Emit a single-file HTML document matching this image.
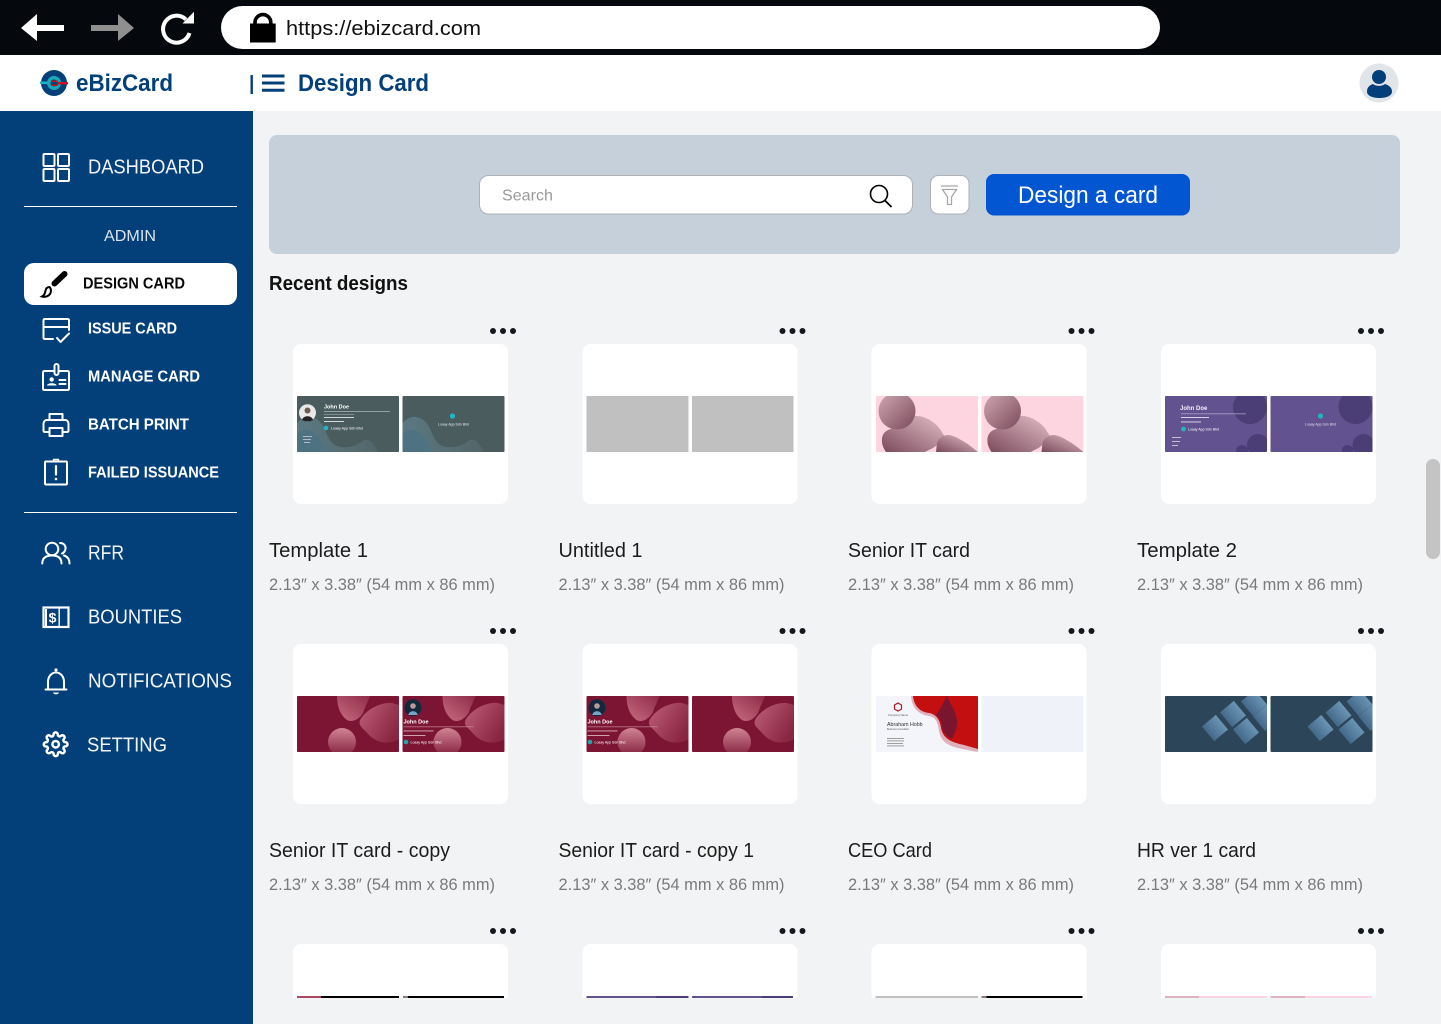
<!DOCTYPE html>
<html lang="en"><head><meta charset="utf-8"><title>eBizCard - Design Card</title>
<style>
html,body{margin:0;padding:0;background:#f2f3f4;overflow:hidden;width:1441px;height:1024px}
svg{display:block}
text{font-family:"Liberation Sans",Arial,sans-serif}
.nav{font-size:20px;fill:#f2f5f8}
.sub{font-size:16px;font-weight:700;fill:#fff}
.t{font-size:20px;fill:#1c1c1c}
.d{font-size:16.5px;fill:#7a7a7a}
.h{font-size:24px;font-weight:700;fill:#03407a}
.ic{fill:none;stroke:#fff;stroke-width:2;stroke-linejoin:round;stroke-linecap:round}
</style></head><body>
<svg xmlns="http://www.w3.org/2000/svg" width="1441" height="1024" viewBox="0 0 1441 1024">
<defs>
<clipPath id="c"><rect width="102" height="56" rx="1"/></clipPath>
<linearGradient id="pg" x1="0" y1="0" x2="1" y2="1"><stop offset="0" stop-color="#d2a8b4"/><stop offset="1" stop-color="#7a4a5a"/></linearGradient>
<linearGradient id="pg2" x1="1" y1="0" x2="0" y2="1"><stop offset="0" stop-color="#e4c0ca"/><stop offset="1" stop-color="#7c4a5b"/></linearGradient>
<linearGradient id="mg" x1="0" y1="0" x2="1" y2="0.6"><stop offset="0" stop-color="#be6078"/><stop offset="1" stop-color="#8a2642"/></linearGradient>
<linearGradient id="mga" x1="1" y1="0" x2="0" y2="1"><stop offset="0" stop-color="#8e2c48"/><stop offset="1" stop-color="#c86c80"/></linearGradient>
<linearGradient id="mg2" x1="0" y1="0" x2="0" y2="1"><stop offset="0" stop-color="#d08494"/><stop offset="1" stop-color="#84203c"/></linearGradient>
<linearGradient id="ng" x1="0" y1="0" x2="1" y2="0"><stop offset="0" stop-color="#44698a"/><stop offset="1" stop-color="#6a94b4"/></linearGradient>
<linearGradient id="gg" x1="0" y1="0" x2="1" y2="0"><stop offset="0" stop-color="#5b7882"/><stop offset="1" stop-color="#526669"/></linearGradient>

<g id="wave"><path d="M0 27C5 22 10 20 14 21C21 22 26 28 29 36C32 44 36 50 44 51C52 52 60 50 67 44C74 42 78 50 81 56H0Z" fill="url(#gg)"/><path d="M0 38C8 30 16 34 22 42C26 48 28 52 30 56H0Z" fill="#4f7282"/></g>

<g id="gf"><g clip-path="url(#c)"><rect width="102" height="56" fill="#4a5c5e"/><use href="#wave"/>
<circle cx="10.5" cy="16.7" r="8.5" fill="#e8e8e8"/><circle cx="10.5" cy="14.5" r="3" fill="#6e5a50"/><path d="M5 24C6 19 15 19 16 24L13 25.2H8Z" fill="#222"/>
<text x="27" y="12.5" font-size="5.5" font-weight="700" fill="#fff">John Doe</text>
<rect x="27" y="15" width="66" height=".8" fill="#a9b4b4"/><rect x="27" y="18" width="30" height=".7" fill="#98a4a4"/>
<rect x="27" y="21" width="30" height=".9" fill="#dfe5e5"/><rect x="27" y="25" width="20" height=".9" fill="#dfe5e5"/>
<circle cx="29" cy="32" r="2.3" fill="#21b6c7"/><text x="34" y="33.5" font-size="3.6" fill="#fff">Loaay App Sdn Bhd</text>
<rect x="6" y="40" width="9" height=".8" fill="#ccd"/><rect x="6" y="43" width="8" height=".8" fill="#ccd"/><rect x="7" y="46" width="6" height=".8" fill="#ccd"/>
</g></g>
<g id="gb"><g clip-path="url(#c)"><rect width="102" height="56" fill="#4a5c5e"/><use href="#wave"/>
<circle cx="50" cy="20" r="2.6" fill="#21b6c7"/><text x="51" y="29.5" text-anchor="middle" font-size="3.5" fill="#e8eeee">Loaay App Sdn Bhd</text></g></g>

<g id="pk"><g clip-path="url(#c)"><rect width="102" height="56" fill="#fdd5e0"/>
<path d="M6 46C5 38 10 34 15 33C22 29 28 23 38 20C47 19 58 25 64 33L69 41C65 46 60 50 57 52L49 56H10C8 53 6 49 6 46Z" fill="url(#pg2)"/>
<circle cx="21" cy="15" r="18.5" fill="url(#pg)"/>
<path d="M61 47C63 41 68 39 73 39C78 40 82 42 85 44C91 47 97 52 102 56H60Z" fill="url(#pg2)"/></g></g>

<g id="pf"><g clip-path="url(#c)"><rect width="102" height="56" fill="#635290"/>
<circle cx="85" cy="11" r="17" fill="#4b3d75"/><circle cx="93" cy="49" r="11" fill="#4b3d75"/><circle cx="77" cy="55" r="6" fill="#4b3d75"/>
<text x="15" y="14" font-size="6" font-weight="700" fill="#f1eff7">John Doe</text>
<rect x="16" y="17.5" width="65" height=".7" fill="#b6add0"/><rect x="16" y="21" width="28" height=".9" fill="#e4e0ef"/><rect x="16" y="25.5" width="20" height=".9" fill="#e4e0ef"/>
<circle cx="18.5" cy="33" r="2.4" fill="#22b4be"/><text x="23" y="34.5" font-size="3.5" fill="#fff">Loaay App Sdn Bhd</text>
<rect x="7" y="41" width="9" height=".8" fill="#ddd"/><rect x="7" y="45" width="8" height=".8" fill="#ddd"/><rect x="7" y="49" width="6" height=".8" fill="#ddd"/></g></g>
<g id="pb"><g clip-path="url(#c)"><rect width="102" height="56" fill="#635290"/>
<circle cx="85" cy="11" r="17" fill="#4b3d75"/><circle cx="93" cy="49" r="11" fill="#4b3d75"/><circle cx="77" cy="55" r="6" fill="#4b3d75"/>
<circle cx="50" cy="20" r="2.6" fill="#22b4be"/><text x="50" y="29.5" text-anchor="middle" font-size="3.5" fill="#e4e0ef">Loaay App Sdn Bhd</text></g></g>

<g id="mb"><g clip-path="url(#c)"><rect width="102" height="56" fill="#7c1533"/>
<path d="M40 0C40 10 43 19 50 24C56 27 62 23 66 17C68 11 71 5 73 0Z" fill="url(#mga)"/>
<path d="M63 24C70 12 85 6 95 7L102 9V43C90 50 78 46 71 38C66 32 61 30 63 24Z" fill="url(#mg)"/>
<circle cx="45" cy="46" r="14" fill="url(#mg2)"/></g></g>
<g id="mt"><use href="#mb"/><g clip-path="url(#c)">
<circle cx="10.5" cy="11.7" r="8.5" fill="#12283c"/><circle cx="10.5" cy="10" r="2.8" fill="#b99"/><path d="M6 19C6 14 15 14 15 19Z" fill="#7aa2c4"/>
<text x="1" y="27.5" font-size="5.5" font-weight="700" fill="#fff">John Doe</text>
<rect x="1" y="30.5" width="70" height=".7" fill="#c98c99"/><rect x="1" y="34.5" width="30" height=".9" fill="#dcb0ba"/><rect x="1" y="39" width="22" height=".9" fill="#dcb0ba"/>
<circle cx="3.5" cy="46" r="2.3" fill="#22a4ae"/><text x="8" y="47.5" font-size="3.5" fill="#fff">Loaay App Sdn Bhd</text></g></g>

<g id="ceo"><g clip-path="url(#c)"><rect width="102" height="56" fill="#f3f5fa"/>
<path d="M35 0C36 13 44 19 53 20C60 21 62 27 63 35C65 46 72 50 86 53L102 56V0Z" fill="#dfb0ba"/>
<path d="M37 0C38 10 44 16 53 17C60 18 64 24 65 32C67 42 74 46 88 49L102 53V0Z" fill="#c30f10"/>
<path d="M71 0C74 8 78 12 80 20C83 27 80 35 76 43C70 40 67 36 66 31C66 25 63 21 60 19C64 14 67 7 71 0Z" fill="#7a1530"/>
<path d="M22 7L25.5 9V13L22 15L18.5 13V9Z" fill="none" stroke="#b5182f" stroke-width="1.2"/>
<text x="22" y="20" text-anchor="middle" font-size="2.8" fill="#555">Company Name</text>
<text x="11" y="30" font-size="5.3" fill="#333">Abraham Hobb</text>
<text x="11" y="34" font-size="2.4" fill="#555">Business Consultant</text>
<rect x="11" y="42" width="17" height=".8" fill="#888"/><rect x="11" y="44.5" width="17" height=".8" fill="#888"/><rect x="11" y="47" width="16" height=".8" fill="#888"/><rect x="11" y="49.5" width="17" height=".8" fill="#888"/></g></g>

<g id="nv"><g clip-path="url(#c)"><rect width="102" height="56" fill="#2d4559"/>
<g fill="url(#ng)"><rect x="-9" y="-9.5" width="18" height="19" transform="translate(50 32) rotate(-40)"/><rect x="-9" y="-9.5" width="18" height="19" transform="translate(68 18) rotate(-40)"/><rect x="-9" y="-9.5" width="18" height="19" transform="translate(81 35) rotate(-40)"/><rect x="-9" y="-9.5" width="18" height="19" transform="translate(89 7) rotate(-40)"/><rect x="-9" y="-9.5" width="18" height="19" transform="translate(101 22) rotate(-40)"/></g></g></g>

<g id="more" fill="#14181c"><circle cx="0" cy="0" r="3"/><circle cx="10" cy="0" r="3"/><circle cx="20" cy="0" r="3"/></g>
</defs>

<rect width="1441" height="1024" fill="#f2f3f4"/>

<!-- browser bar -->
<rect width="1441" height="55" fill="#05090d"/>
<path d="M21 28L37 14V25H64V31H37V41Z" fill="#fff"/>
<path d="M134 28L118 14V25H91V31H118V41Z" fill="#8f8f8f"/>
<path d="M186 19.5A13.5 13.5 0 1 0 189.5 33" fill="none" stroke="#fff" stroke-width="4"/>
<path d="M194 11.7V23.5H182.5Z" fill="#fff"/>
<rect x="221" y="6" width="939" height="43" rx="21.5" fill="#fff"/>
<rect x="250" y="23.5" width="25.7" height="19" fill="#000"/>
<path d="M255 25V22.5a7.9 7.9 0 0 1 15.8 0V25" fill="none" stroke="#000" stroke-width="3.6"/>
<text x="286" y="35" font-size="20" fill="#111" textLength="195" lengthAdjust="spacingAndGlyphs">https://ebizcard.com</text>

<!-- app header -->
<rect y="55" width="1441" height="56" fill="#fff"/>
<circle cx="54" cy="83" r="13" fill="#03407a"/>
<rect x="40" y="81.5" width="18" height="2.5" fill="#22b4c4"/>
<circle cx="54" cy="83" r="7" fill="#1aa9b8"/><circle cx="54" cy="83" r="3.5" fill="#03407a"/>
<path d="M52 80.5H58V82H68V84.5H58V86H52V84.5H57V82H52Z" fill="#c8141e"/>
<text x="76" y="91" class="h" textLength="97" lengthAdjust="spacingAndGlyphs">eBizCard</text>
<rect x="250.5" y="75" width="2.4" height="19" fill="#03407a"/>
<path d="M262 76H284.5M262 83H284.5M262 90.3H284.5" stroke="#03407a" stroke-width="3" fill="none"/>
<text x="298" y="91" class="h" textLength="131" lengthAdjust="spacingAndGlyphs">Design Card</text>
<circle cx="1379" cy="83" r="19.5" fill="#e1e4e8"/>
<circle cx="1379" cy="77" r="7" fill="#03407a"/>
<path d="M1367 91.5C1367 87 1370 85 1373 84C1376 86.5 1382 86.5 1385 84C1388 85 1392 87 1392 91.5C1392 96 1386 98 1379.5 98C1373 98 1367 96 1367 91.5Z" fill="#03407a"/>

<!-- sidebar -->
<rect y="111" width="253" height="913" fill="#03407a"/>
<g class="ic"><rect x="43.5" y="154" width="11" height="12" rx="1"/><rect x="58" y="154" width="11" height="12" rx="1"/><rect x="43.5" y="169" width="11" height="12" rx="1"/><rect x="58" y="169" width="11" height="12" rx="1"/></g>
<text x="88" y="173.5" class="nav" textLength="116" lengthAdjust="spacingAndGlyphs">DASHBOARD</text>
<rect x="24" y="206" width="213" height="1" fill="#fff"/>
<text x="104" y="241" font-size="16" fill="#dbe3ea" textLength="52" lengthAdjust="spacingAndGlyphs">ADMIN</text>

<rect x="24" y="263" width="213" height="42" rx="10" fill="#fff"/>
<path d="M64.5 274L54.5 283.5" stroke="#000" stroke-width="6" stroke-linecap="round"/>
<path d="M49.5 287C47 287 45.7 289 45.3 291.5C45 293.5 43.7 295.5 42 296.5C45.5 297.5 49.5 296 50.7 292.5C51.2 290.5 51 288.5 49.5 287Z" fill="none" stroke="#000" stroke-width="2"/>
<text x="83" y="288.5" class="sub" style="fill:#0a0a0a" textLength="102" lengthAdjust="spacingAndGlyphs">DESIGN CARD</text>

<g class="ic"><path d="M53 339H45C44 339 43.5 338.5 43.5 337.5V320.5C43.5 319.5 44 319 45 319H67.5C68.5 319 69 319.5 69 320.5V330"/><path d="M43.5 327H69"/><path d="M57 338L60.5 342L69 333.5"/></g>
<text x="88" y="333.5" class="sub" textLength="89" lengthAdjust="spacingAndGlyphs">ISSUE CARD</text>

<g class="ic" stroke-width="1.7"><path d="M54.5 371H44.5C43.5 371 43 371.5 43 372.5V388.5C43 389.5 43.5 390 44.5 390H67.5C68.5 390 69 389.5 69 388.5V372.5C69 371.5 68.5 371 67.5 371H58.5"/><rect x="54.5" y="364" width="4" height="11" rx="2"/><path d="M59.5 380H65.5M59.5 384H65.5"/></g>
<circle cx="51.7" cy="379.5" r="2.2" fill="#fff"/><path d="M47 385.5C47 382.5 56.5 382.5 56.5 385.5Z" fill="#fff"/>
<text x="88" y="381.5" class="sub" textLength="112" lengthAdjust="spacingAndGlyphs">MANAGE CARD</text>

<g class="ic" stroke-width="2.3"><path d="M49.5 420V414H62.5V420"/><path d="M49.5 432H45C44 432 43.5 431.5 43.5 430.5V424C43.5 421.5 45 420 47 420H65C67 420 68.5 421.5 68.5 424V430.5C68.5 431.5 68 432 67 432H62.5"/><rect x="49.5" y="428" width="13" height="8"/></g>
<text x="88" y="429.5" class="sub" textLength="101" lengthAdjust="spacingAndGlyphs">BATCH PRINT</text>

<g class="ic"><rect x="45" y="461.5" width="22" height="23" rx="1"/><path d="M56 466V474.5" stroke-width="2.2"/><path d="M53.5 461V459.5H58.5V461" stroke-width="1.5"/></g>
<circle cx="56" cy="479" r="1.3" fill="#fff"/>
<text x="88" y="477.5" class="sub" textLength="131" lengthAdjust="spacingAndGlyphs">FAILED ISSUANCE</text>

<rect x="24" y="512" width="213" height="1" fill="#fff"/>

<g class="ic" stroke-width="2.4"><circle cx="52" cy="549" r="6.3"/><path d="M42.3 563.5C42.3 558 46 555.5 52 555.5C58 555.5 61.5 558 61.5 563.5"/><path d="M60 543C64 543 66 546 65.5 549C65 551.5 63.5 553 62 553.5"/><path d="M64 555.5C67.5 556.5 69.5 559.5 69.5 563.5"/></g>
<text x="88" y="559.5" class="nav" textLength="36" lengthAdjust="spacingAndGlyphs">RFR</text>

<rect x="43.5" y="607.5" width="25" height="19.5" fill="none" stroke="#fff" stroke-width="2.2"/>
<rect x="58.5" y="608" width="1.4" height="19" fill="#fff"/>
<rect x="45" y="609" width="2" height="17" fill="#fff"/>
<text x="52.5" y="622.5" text-anchor="middle" font-size="14" font-weight="700" fill="#fff">$</text>
<text x="88" y="623.5" class="nav" textLength="94" lengthAdjust="spacingAndGlyphs">BOUNTIES</text>

<g class="ic"><path d="M45.5 689.5H66.5"/><path d="M48 689V682C48 676.5 51.5 672.5 56 672.5C60.5 672.5 64 676.5 64 682V689"/></g>
<circle cx="56" cy="670" r="1.6" fill="#fff"/><path d="M53 692.5H59C58.5 695 53.5 695 53 692.5Z" fill="#fff"/>
<text x="88" y="687.5" class="nav" textLength="144" lengthAdjust="spacingAndGlyphs">NOTIFICATIONS</text>

<g transform="translate(42.7 731.3) scale(1.08)" fill="none" stroke="#fff" stroke-width="2.3" stroke-linecap="round" stroke-linejoin="round"><path d="M12 15a3 3 0 1 0 0-6 3 3 0 0 0 0 6z"/><path d="M19.4 15a1.65 1.65 0 0 0 .33 1.82l.06.06a2 2 0 0 1 0 2.83 2 2 0 0 1-2.83 0l-.06-.06a1.65 1.65 0 0 0-1.82-.33 1.65 1.65 0 0 0-1 1.51V21a2 2 0 0 1-2 2 2 2 0 0 1-2-2v-.09A1.65 1.65 0 0 0 9 19.4a1.65 1.65 0 0 0-1.82.33l-.06.06a2 2 0 0 1-2.83 0 2 2 0 0 1 0-2.83l.06-.06a1.65 1.65 0 0 0 .33-1.82 1.65 1.65 0 0 0-1.51-1H3a2 2 0 0 1-2-2 2 2 0 0 1 2-2h.09A1.65 1.65 0 0 0 4.6 9a1.65 1.65 0 0 0-.33-1.82l-.06-.06a2 2 0 0 1 0-2.83 2 2 0 0 1 2.83 0l.06.06a1.65 1.65 0 0 0 1.82.33H9a1.65 1.65 0 0 0 1-1.51V3a2 2 0 0 1 2-2 2 2 0 0 1 2 2v.09a1.65 1.65 0 0 0 1 1.51 1.65 1.65 0 0 0 1.82-.33l.06-.06a2 2 0 0 1 2.83 0 2 2 0 0 1 0 2.83l-.06.06a1.65 1.65 0 0 0-.33 1.82V9a1.65 1.65 0 0 0 1.51 1H21a2 2 0 0 1 2 2 2 2 0 0 1-2 2h-.09a1.65 1.65 0 0 0-1.51 1z"/></g>
<text x="87" y="751.5" class="nav" textLength="80" lengthAdjust="spacingAndGlyphs">SETTING</text>

<!-- search panel -->
<rect x="269" y="135" width="1131" height="119" rx="8" fill="#c5d0da"/>
<rect x="479.5" y="175.5" width="433" height="38.5" rx="9" fill="#fff" stroke="#aeb2b6"/>
<text x="502" y="200.5" font-size="16" fill="#9a9a9a" textLength="51" lengthAdjust="spacingAndGlyphs">Search</text>
<circle cx="879" cy="194" r="8.5" fill="none" stroke="#000" stroke-width="1.6"/>
<path d="M885 200.5L891.5 207" stroke="#000" stroke-width="1.8" fill="none"/>
<rect x="930.5" y="175.5" width="38.5" height="38.5" rx="8" fill="#fff" stroke="#aeb2b6"/>
<path d="M941 186H958M942.5 189.5H956.5L951.5 197V204.5L947.5 204.5V197Z" fill="none" stroke="#a8a8a8" stroke-width="1.3"/>
<rect x="986" y="174" width="204" height="41.5" rx="8" fill="#0256d2"/>
<text x="1018" y="203" font-size="24" fill="#fff" textLength="140" lengthAdjust="spacingAndGlyphs">Design a card</text>

<text x="269" y="290" font-size="20" font-weight="700" fill="#111" textLength="139" lengthAdjust="spacingAndGlyphs">Recent designs</text>

<!-- scrollbar -->
<rect x="1426" y="459" width="14" height="100" rx="7" fill="#c4c4c4"/>

<!-- row 1 -->
<use href="#more" x="493" y="331"/><use href="#more" x="782.5" y="331"/><use href="#more" x="1071.5" y="331"/><use href="#more" x="1361" y="331"/>
<rect x="293" y="344" width="215" height="160" rx="8" fill="#fff"/><rect x="582.5" y="344" width="215" height="160" rx="8" fill="#fff"/><rect x="871.5" y="344" width="215" height="160" rx="8" fill="#fff"/><rect x="1161" y="344" width="215" height="160" rx="8" fill="#fff"/>
<use href="#gf" x="297" y="396"/><use href="#gb" x="402.5" y="396"/>
<rect x="586.5" y="396" width="102" height="56" fill="#c0c0c0"/><rect x="692" y="396" width="101.5" height="56" fill="#c0c0c0"/>
<use href="#pk" x="876" y="396"/><use href="#pk" x="981.5" y="396"/>
<use href="#pf" x="1165" y="396"/><use href="#pb" x="1270.5" y="396"/>
<text x="269" y="557" class="t" textLength="99" lengthAdjust="spacingAndGlyphs">Template 1</text>
<text x="558.5" y="557" class="t" textLength="84" lengthAdjust="spacingAndGlyphs">Untitled 1</text>
<text x="848" y="557" class="t" textLength="122" lengthAdjust="spacingAndGlyphs">Senior IT card</text>
<text x="1137" y="557" class="t" textLength="100" lengthAdjust="spacingAndGlyphs">Template 2</text>
<text x="269" y="590" class="d" textLength="226" lengthAdjust="spacingAndGlyphs">2.13″ x 3.38″ (54 mm x 86 mm)</text>
<text x="558.5" y="590" class="d" textLength="226" lengthAdjust="spacingAndGlyphs">2.13″ x 3.38″ (54 mm x 86 mm)</text>
<text x="848" y="590" class="d" textLength="226" lengthAdjust="spacingAndGlyphs">2.13″ x 3.38″ (54 mm x 86 mm)</text>
<text x="1137" y="590" class="d" textLength="226" lengthAdjust="spacingAndGlyphs">2.13″ x 3.38″ (54 mm x 86 mm)</text>

<!-- row 2 -->
<use href="#more" x="493" y="631"/><use href="#more" x="782.5" y="631"/><use href="#more" x="1071.5" y="631"/><use href="#more" x="1361" y="631"/>
<rect x="293" y="644" width="215" height="160" rx="8" fill="#fff"/><rect x="582.5" y="644" width="215" height="160" rx="8" fill="#fff"/><rect x="871.5" y="644" width="215" height="160" rx="8" fill="#fff"/><rect x="1161" y="644" width="215" height="160" rx="8" fill="#fff"/>
<use href="#mb" x="297" y="696"/><use href="#mt" x="402.5" y="696"/>
<use href="#mt" x="586.5" y="696"/><use href="#mb" x="692" y="696"/>
<use href="#ceo" x="876" y="696"/><rect x="981.5" y="696" width="101.5" height="56" fill="#eff2f9"/>
<use href="#nv" x="1165" y="696"/><use href="#nv" x="1270.5" y="696"/>
<text x="269" y="857" class="t" textLength="181" lengthAdjust="spacingAndGlyphs">Senior IT card - copy</text>
<text x="558.5" y="857" class="t" textLength="195.5" lengthAdjust="spacingAndGlyphs">Senior IT card - copy 1</text>
<text x="848" y="857" class="t" textLength="84" lengthAdjust="spacingAndGlyphs">CEO Card</text>
<text x="1137" y="857" class="t" textLength="119" lengthAdjust="spacingAndGlyphs">HR ver 1 card</text>
<text x="269" y="890" class="d" textLength="226" lengthAdjust="spacingAndGlyphs">2.13″ x 3.38″ (54 mm x 86 mm)</text>
<text x="558.5" y="890" class="d" textLength="226" lengthAdjust="spacingAndGlyphs">2.13″ x 3.38″ (54 mm x 86 mm)</text>
<text x="848" y="890" class="d" textLength="226" lengthAdjust="spacingAndGlyphs">2.13″ x 3.38″ (54 mm x 86 mm)</text>
<text x="1137" y="890" class="d" textLength="226" lengthAdjust="spacingAndGlyphs">2.13″ x 3.38″ (54 mm x 86 mm)</text>

<!-- row 3 clipped -->
<use href="#more" x="493" y="931"/><use href="#more" x="782.5" y="931"/><use href="#more" x="1071.5" y="931"/><use href="#more" x="1361" y="931"/>
<g fill="#fff">
<path d="M293 998V952a8 8 0 0 1 8-8H500a8 8 0 0 1 8 8V998Z"/>
<path d="M582.5 998V952a8 8 0 0 1 8-8H789.5a8 8 0 0 1 8 8V998Z"/>
<path d="M871.5 998V952a8 8 0 0 1 8-8H1078.5a8 8 0 0 1 8 8V998Z"/>
<path d="M1161 998V952a8 8 0 0 1 8-8H1368a8 8 0 0 1 8 8V998Z"/>
</g>
<rect x="297" y="996" width="102" height="2" fill="#000"/><rect x="297" y="996" width="24" height="2" fill="#a84a62"/>
<rect x="403" y="996" width="101" height="2" fill="#000"/><rect x="403" y="996" width="5" height="2" fill="#8a7a7a"/>
<rect x="586.5" y="996" width="102" height="2" fill="#635290"/><rect x="656" y="996" width="32.5" height="2" fill="#4b3d75"/>
<rect x="692" y="996" width="101" height="2" fill="#635290"/><rect x="762" y="996" width="31" height="2" fill="#4b3d75"/>
<rect x="875.5" y="996" width="102.5" height="2" fill="#c0c0c0"/>
<rect x="981.5" y="996" width="101" height="2" fill="#000"/><rect x="981.5" y="996" width="5" height="2" fill="#8a7a7a"/>
<rect x="1165" y="996" width="102" height="2" fill="#fdd5e0"/><rect x="1165" y="996" width="34" height="2" fill="#dcb4c0"/>
<rect x="1270.5" y="996" width="101.5" height="2" fill="#fdd5e0"/><rect x="1270.5" y="996" width="34.5" height="2" fill="#dcb4c0"/>
</svg>
</body></html>
